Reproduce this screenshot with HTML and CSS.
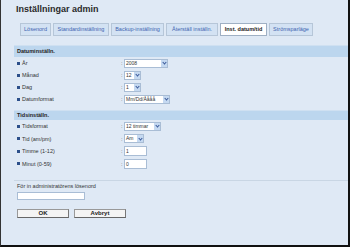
FILE: index.html
```html
<!DOCTYPE html>
<html lang="sv">
<head>
  <meta charset="UTF-8" />
  <title>Inställningar admin</title>
  <link rel="stylesheet" href="styles.css">
</head>
<body>
  <div class="pagina">
    <h1 class="titulo">Inställningar admin</h1>

    <div class="abas">
      <span class="aba aba-1">Lösenord</span>
      <span class="aba aba-2">Standardinställning</span>
      <span class="aba aba-3">Backup-inställning</span>
      <span class="aba aba-4">Återställ inställn.</span>
      <span class="aba aba-5 ativa">Inst. datum/tid</span>
      <span class="aba aba-6">Strömsparläge</span>
    </div>

    <div class="secao">
      <div class="cabecalho">Datuminställn.</div>
      <div class="linha">
        <span class="rotulo">År</span><span class="dois">:</span>
        <div class="sel w-ano"><span class="val">2008</span><span class="seta"></span></div>
      </div>
      <div class="linha">
        <span class="rotulo">Månad</span><span class="dois">:</span>
        <div class="sel w-mes"><span class="val">12</span><span class="seta"></span></div>
      </div>
      <div class="linha">
        <span class="rotulo">Dag</span><span class="dois">:</span>
        <div class="sel w-mes"><span class="val">1</span><span class="seta"></span></div>
      </div>
      <div class="linha">
        <span class="rotulo">Datumformat</span><span class="dois">:</span>
        <div class="sel w-fmt"><span class="val">Mm/Dd/Åååå</span><span class="seta"></span></div>
      </div>

      <div class="cabecalho cab-2">Tidsinställn.</div>
      <div class="linha linha-2">
        <span class="rotulo">Tidsformat</span><span class="dois">:</span>
        <div class="sel w-tim"><span class="val">12 timmar</span><span class="seta"></span></div>
      </div>
      <div class="linha linha-2">
        <span class="rotulo">Tid (am/pm)</span><span class="dois">:</span>
        <div class="sel w-am"><span class="val">Am</span><span class="seta"></span></div>
      </div>
      <div class="linha linha-2">
        <span class="rotulo">Timme (1-12)</span><span class="dois">:</span>
        <div class="campo">1</div>
      </div>
      <div class="linha linha-2">
        <span class="rotulo">Minut (0-59)</span><span class="dois">:</span>
        <div class="campo">0</div>
      </div>
    </div>

    <div class="senha">
      <div class="senha-texto">För in administratörens lösenord</div>
      <div class="senha-campo"></div>
      <div class="botoes">
        <span class="botao">OK</span>
        <span class="botao">Avbryt</span>
      </div>
    </div>
  </div>
</body>
</html>
```

FILE: styles.css
```css
html, body {
  margin: 0;
  padding: 0;
}

body {
  font-family: "Liberation Sans", Arial, sans-serif;
  color: #222;
}

.pagina {
  width: 350px;
  height: 247px;
  box-sizing: border-box;
  background-color: #dfe9f5;
  border-left: 1px solid #333;
  border-right: 2px solid #111;
  border-bottom: 2px solid #111;
  padding: 3px 0 0 13px;
  overflow: hidden;
}

.titulo {
  margin: 0 0 0 2px;
  font-size: 9px;
  line-height: 12px;
  font-weight: bold;
  color: #2a2a2a;
}

.abas {
  display: flex;
  gap: 2px;
  margin: 8px 0 0 6px;
  height: 13px;
}

.aba {
  box-sizing: border-box;
  height: 13px;
  border: 1px solid #b6c6d8;
  background-color: #d3e2f3;
  color: #3f64b0;
  font-size: 5.5px;
  line-height: 11px;
  text-align: center;
  white-space: nowrap;
}

.aba-1 { width: 31px; }
.aba-2 { width: 56px; }
.aba-3 { width: 53px; }
.aba-4 { width: 52px; }
.aba-5 { width: 47px; }
.aba-6 { width: 44px; }

.aba.ativa {
  background-color: #fff;
  color: #222;
  font-weight: bold;
  border-color: #9fb0c4;
}

.secao {
  margin-top: 9px;
}

.cabecalho {
  height: 11px;
  background-color: #bcd6ee;
  border-top: 1px solid #cfe0f1;
  font-size: 5.5px;
  font-weight: bold;
  line-height: 11px;
  padding-left: 3px;
  color: #222;
}

.cab-2 {
  margin-top: 5px;
  height: 9px;
  line-height: 9px;
}

.linha {
  display: flex;
  align-items: center;
  height: 12px;
  font-size: 5.5px;
  color: #333;
}

.linha-2 {
  height: 12.5px;
}

.rotulo {
  width: 99px;
  padding-left: 8px;
  position: relative;
}

.rotulo::before {
  content: "";
  position: absolute;
  left: 3px;
  top: 50%;
  margin-top: -1.5px;
  width: 3px;
  height: 3px;
  background-color: #2c4f8a;
}

.dois {
  width: 3px;
  color: #555;
}

.sel {
  display: flex;
  box-sizing: border-box;
  height: 9px;
  background-color: #fff;
  border: 1px solid #a9bdd5;
  font-size: 5px;
  line-height: 7px;
}

.sel .val {
  flex: 1;
  padding-left: 1px;
  white-space: nowrap;
  overflow: hidden;
}

.sel .seta {
  width: 6px;
  background-color: #c5d9f1;
  position: relative;
}

.sel .seta::after {
  content: "";
  position: absolute;
  left: 1.5px;
  top: 1.5px;
  width: 2px;
  height: 2px;
  border-right: 1px solid #3a5a9a;
  border-bottom: 1px solid #3a5a9a;
  transform: rotate(45deg);
}

.w-ano { width: 44px; }
.w-mes { width: 17px; }
.w-fmt { width: 46px; }
.w-tim { width: 37px; }
.w-am { width: 20px; }

.campo {
  box-sizing: border-box;
  width: 23px;
  height: 10px;
  background-color: #fff;
  border: 1px solid #a9bdd5;
  font-size: 5px;
  line-height: 8px;
  padding-left: 1px;
}

.senha {
  margin-top: 10px;
  border-top: 1px solid #c9d6e4;
  padding: 1px 0 0 3px;
}

.senha-texto {
  font-size: 5.5px;
  line-height: 9px;
  color: #333;
}

.senha-campo {
  width: 68px;
  height: 8px;
  box-sizing: border-box;
  background-color: #fff;
  border: 1px solid #a9bdd5;
  margin-top: 1px;
}

.botoes {
  display: flex;
  gap: 5px;
  margin-top: 9px;
}

.botao {
  box-sizing: border-box;
  width: 52px;
  height: 9px;
  background-color: #f4f4f4;
  border: 1px solid #999;
  border-right-color: #777;
  border-bottom-color: #666;
  font-size: 6px;
  line-height: 7px;
  font-weight: bold;
  text-align: center;
  color: #222;
}
```
